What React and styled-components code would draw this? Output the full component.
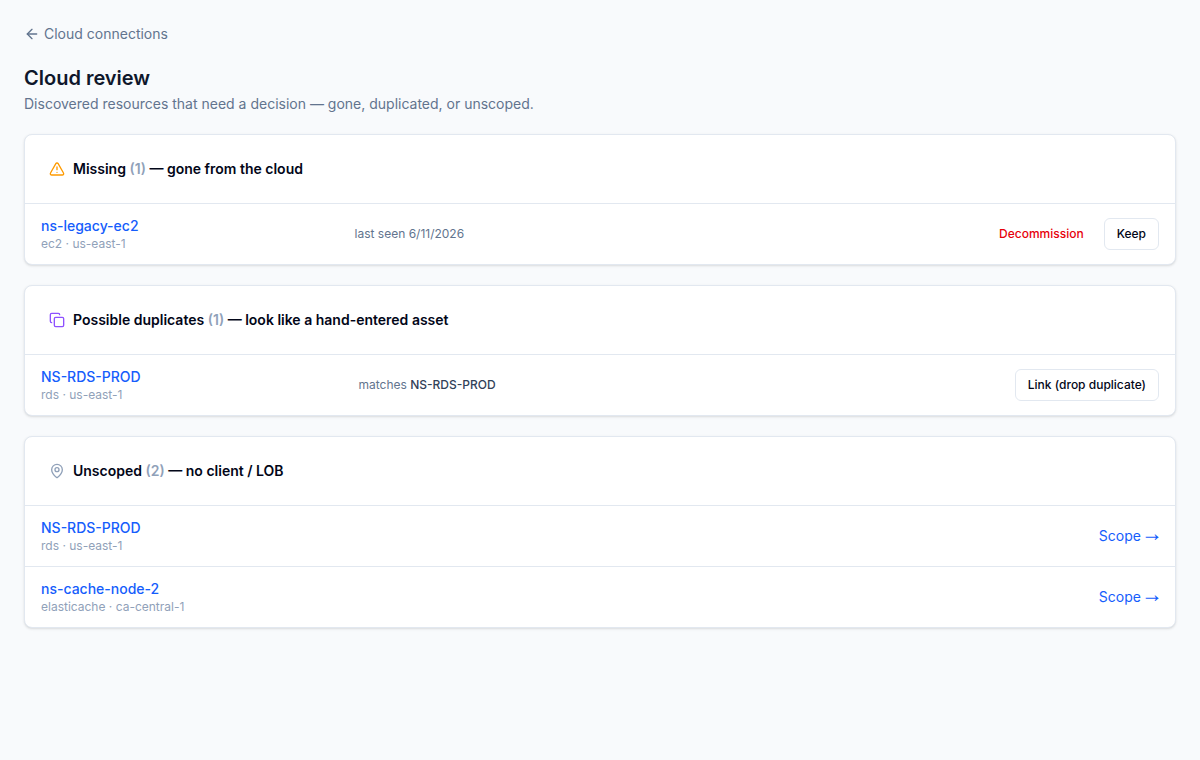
import React from "react"
import styled, { createGlobalStyle } from "styled-components"
import { ArrowLeft, Copy, MapPin, TriangleAlert } from "lucide-react"

const GlobalStyle = createGlobalStyle`
  *,
  *::before,
  *::after {
    box-sizing: border-box;
  }
  body {
    margin: 0;
    min-height: 100vh;
    background: #f8fafc;
    color: #020618;
    font-family: Inter, sans-serif;
    font-size: 14px;
    line-height: 20px;
  }
`

const Page = styled.main`
  display: flex;
  flex-direction: column;
  gap: 20px;
  padding: 24px;
`

const BackLink = styled.a`
  display: inline-flex;
  align-items: center;
  align-self: flex-start;
  gap: 4px;
  color: #62748e;
  text-decoration: none;

  &:hover {
    color: #0f172b;
  }
`

const Title = styled.h1`
  margin: 0;
  color: #0f172b;
  font-size: 20px;
  font-weight: 600;
  line-height: 28px;
`

const Subtitle = styled.p`
  margin: 2px 0 0;
  color: #62748e;
`

const Card = styled.section`
  overflow: hidden;
  border: 1px solid #e2e8f0;
  border-radius: 8px;
  background: #fff;
  box-shadow: 0 1px 3px rgba(0, 0, 0, 0.1), 0 1px 2px -1px rgba(0, 0, 0, 0.1);
`

const CardTitle = styled.h2`
  display: flex;
  align-items: center;
  gap: 8px;
  margin: 0;
  padding: 24px;
  font-size: 14px;
  font-weight: 600;
  line-height: 20px;

  svg {
    flex: none;
    color: ${(props) => props.$iconColor};
  }
`

const Count = styled.span`
  color: #90a1b9;
`

const Table = styled.table`
  width: 100%;
  border-spacing: 0;
`

const Cell = styled.td`
  padding: 12px 16px;
  border-top: 1px solid #e2e8f0;
  text-align: ${(props) => props.$align || "left"};
  vertical-align: middle;
`

const ResourceLink = styled.a`
  display: block;
  width: fit-content;
  color: #155dfc;
  font-weight: 500;
  text-decoration: none;

  &:hover {
    text-decoration: underline;
  }
`

const Meta = styled.div`
  color: #90a1b9;
  font-size: 12px;
  line-height: 16px;
`

const Note = styled.span`
  display: block;
  color: #62748e;
  font-size: 12px;
  line-height: 16px;
`

const Match = styled.span`
  color: #314158;
  font-weight: 500;
`

const Actions = styled.div`
  display: flex;
  justify-content: flex-end;
  gap: 8px;
`

const Button = styled.button`
  height: 32px;
  padding: 0 12px;
  border: ${(props) => (props.$danger ? "none" : "1px solid #e2e8f0")};
  border-radius: 6px;
  background: ${(props) => (props.$danger ? "transparent" : "#fff")};
  color: ${(props) => (props.$danger ? "#e7000b" : "#020618")};
  font-family: inherit;
  font-size: 12px;
  font-weight: 500;
  line-height: 16px;
  white-space: nowrap;
  cursor: pointer;

  &:hover {
    background: #f1f5f9;
  }
`

const ScopeLink = styled.a`
  color: #155dfc;
  text-decoration: none;

  &:hover {
    text-decoration: underline;
  }
`

const Arrow = styled.span`
  font-family: "Noto Sans Math", Inter, sans-serif;
  line-height: 1;
`

const unscoped = [
  { name: "NS-RDS-PROD", kind: "rds", region: "us-east-1" },
  { name: "ns-cache-node-2", kind: "elasticache", region: "ca-central-1" },
]

const Resource = ({ name, kind, region }) => (
  <Cell>
    <ResourceLink href="#">{name}</ResourceLink>
    <Meta>
      {kind} · {region}
    </Meta>
  </Cell>
)

const Section = ({ icon: Icon, iconColor, label, count, detail, children }) => (
  <Card>
    <CardTitle $iconColor={iconColor}>
      <Icon size={16} aria-hidden="true" />
      <span>
        {label} <Count>({count})</Count> — {detail}
      </span>
    </CardTitle>
    <Table>
      <tbody>{children}</tbody>
    </Table>
  </Card>
)

const App = () => (
  <>
    <GlobalStyle />
    <Page>
      <BackLink href="#">
        <ArrowLeft size={16} aria-hidden="true" />
        Cloud connections
      </BackLink>
      <header>
        <Title>Cloud review</Title>
        <Subtitle>
          Discovered resources that need a decision — gone, duplicated, or
          unscoped.
        </Subtitle>
      </header>
      <Section
        icon={TriangleAlert}
        iconColor="#fe9a00"
        label="Missing"
        count={1}
        detail="gone from the cloud"
      >
        <tr>
          <Resource name="ns-legacy-ec2" kind="ec2" region="us-east-1" />
          <Cell>
            <Note>last seen 6/11/2026</Note>
          </Cell>
          <Cell>
            <Actions>
              <Button type="button" $danger>
                Decommission
              </Button>
              <Button type="button">Keep</Button>
            </Actions>
          </Cell>
        </tr>
      </Section>
      <Section
        icon={Copy}
        iconColor="#8e51ff"
        label="Possible duplicates"
        count={1}
        detail="look like a hand-entered asset"
      >
        <tr>
          <Resource name="NS-RDS-PROD" kind="rds" region="us-east-1" />
          <Cell>
            <Note>
              matches <Match>NS-RDS-PROD</Match>
            </Note>
          </Cell>
          <Cell>
            <Actions>
              <Button type="button">Link (drop duplicate)</Button>
            </Actions>
          </Cell>
        </tr>
      </Section>
      <Section
        icon={MapPin}
        iconColor="#90a1b9"
        label="Unscoped"
        count={2}
        detail="no client / LOB"
      >
        {unscoped.map((item) => (
          <tr key={item.name}>
            <Resource {...item} />
            <Cell $align="right">
              <ScopeLink href="#">
                Scope <Arrow>→</Arrow>
              </ScopeLink>
            </Cell>
          </tr>
        ))}
      </Section>
    </Page>
  </>
)

export default App
